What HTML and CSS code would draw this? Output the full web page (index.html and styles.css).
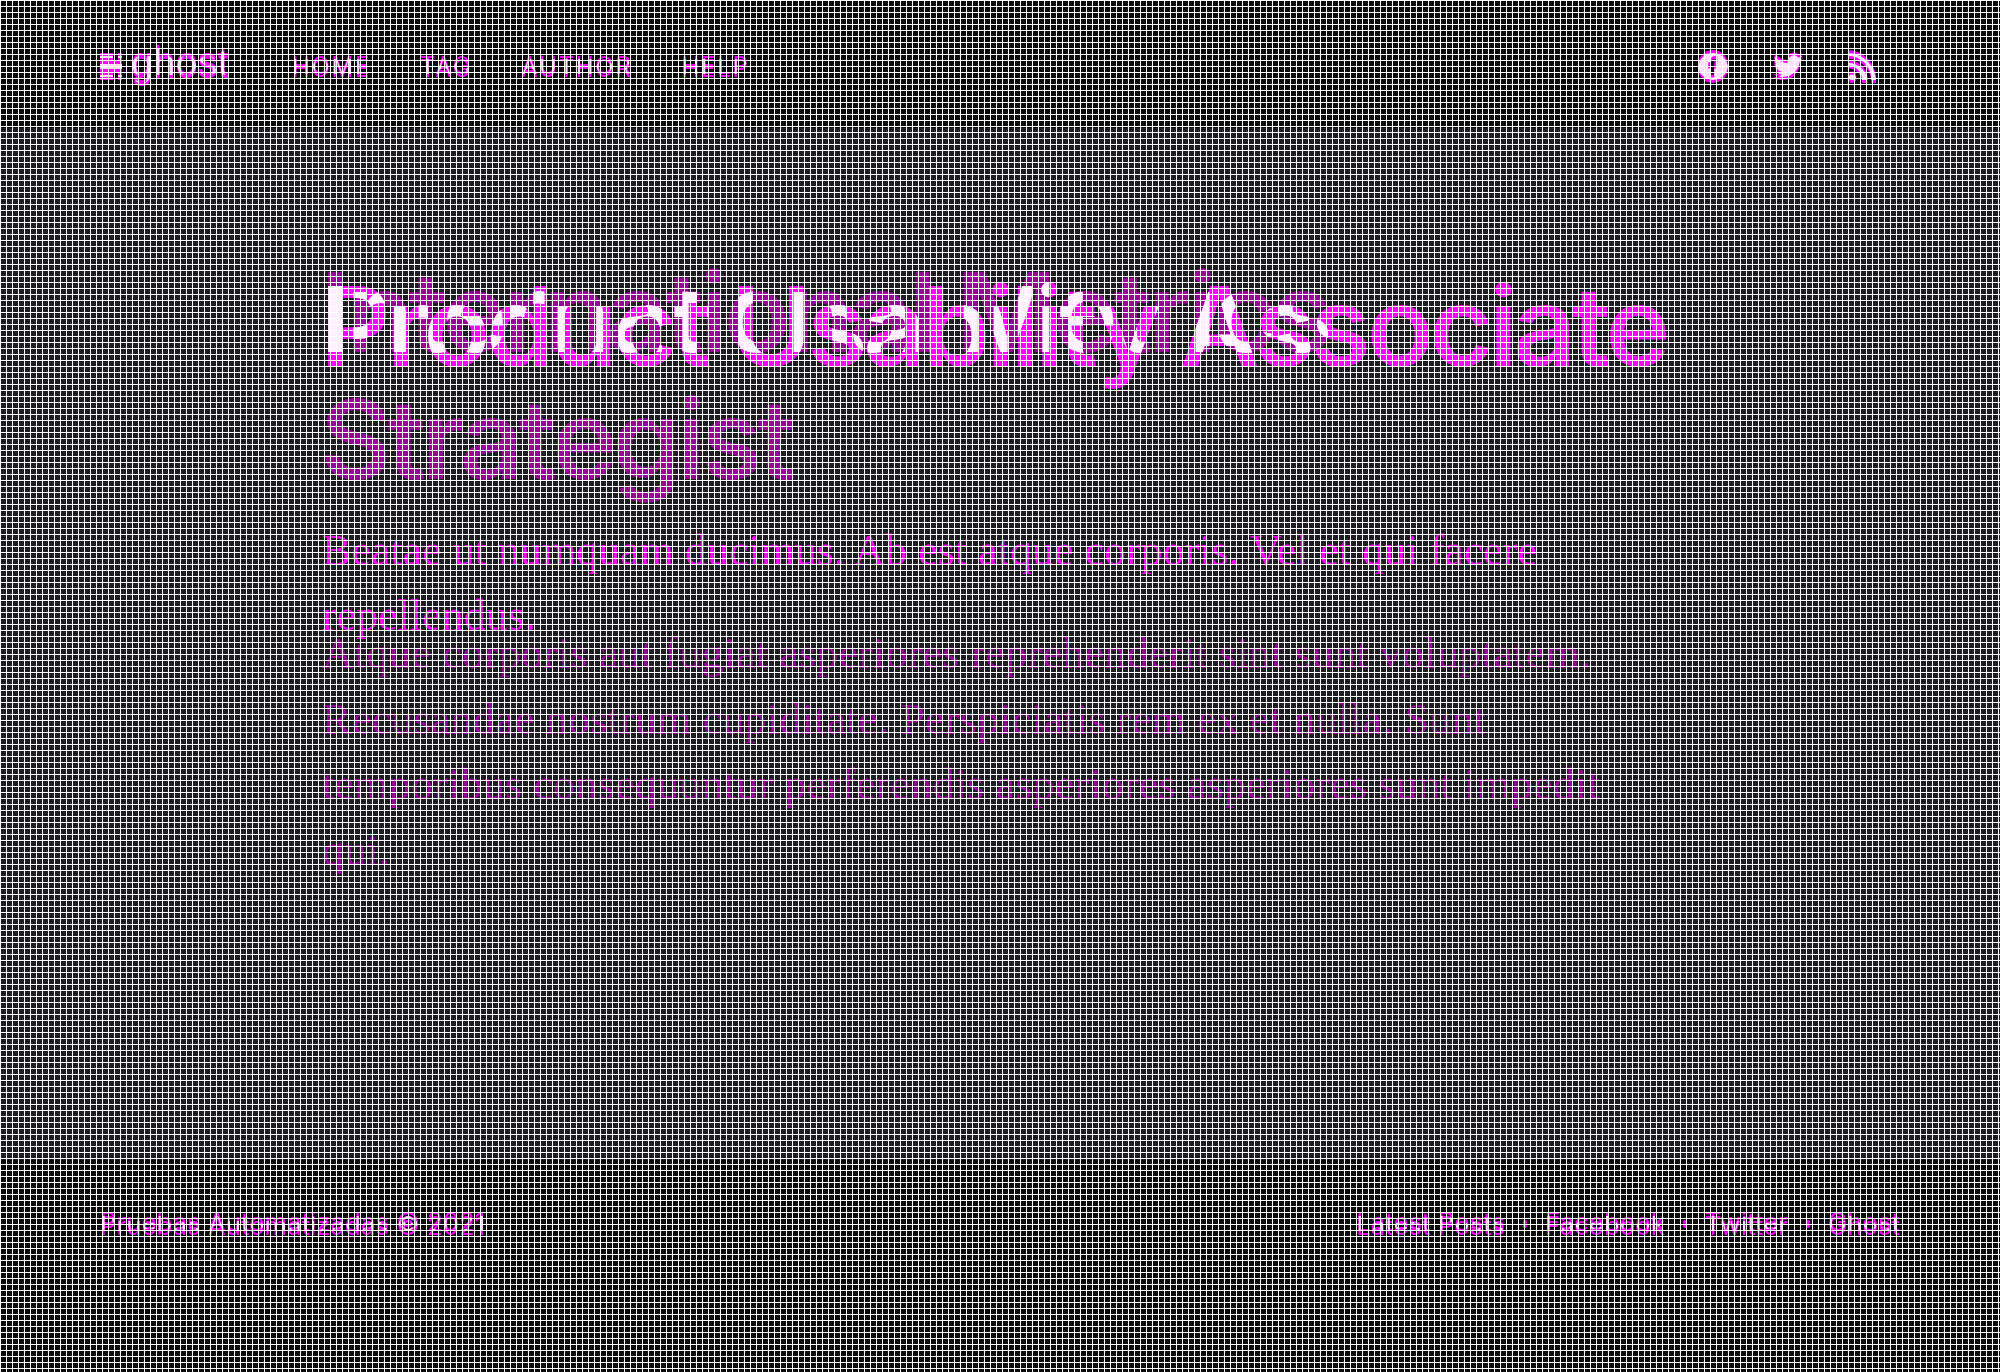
FILE: index.html
```html
<!DOCTYPE html>
<html lang="en">
<head>
<meta charset="utf-8">
<title>Product Usability Associate</title>
<link rel="stylesheet" href="styles.css">
</head>
<body>
<svg class="defs" width="0" height="0" aria-hidden="true">
  <symbol id="i-mark" viewBox="0 0 22 24">
    <rect x="0" y="0" width="13" height="5"/><rect x="18" y="0" width="4" height="5"/>
    <rect x="0" y="8" width="22" height="8"/>
    <rect x="0" y="19" width="13" height="5"/><rect x="18" y="19" width="4" height="5"/>
  </symbol>
  <symbol id="i-fb" viewBox="0 0 32 32">
    <path d="M16 0a16 16 0 1 0 0 32 16 16 0 0 0 0-32zm4.6 10.2h-2.2c-1 0-1.2.5-1.2 1.200v1.700h3.300l-.4 3.400h-2.900V26h-3.500v-9.500H10.900v-3.400h2.800v-2.200c0-3 1.700-4.400 4.200-4.400 1.200 0 2.200.1 2.700.1z"/>
  </symbol>
  <symbol id="i-tw" viewBox="0 0 32 27">
    <path d="M32 3.200a13 13 0 0 1-3.800 1 6.500 6.500 0 0 0 2.900-3.600 13 13 0 0 1-4.100 1.600A6.600 6.600 0 0 0 15.800 8.200 18.600 18.600 0 0 1 2.300 1.300a6.600 6.600 0 0 0 2 8.800 6.500 6.500 0 0 1-3-.8v.1a6.600 6.600 0 0 0 5.300 6.400 6.600 6.600 0 0 1-3 .1 6.600 6.600 0 0 0 6.200 4.600A13.200 13.200 0 0 1 0 23.300 18.600 18.600 0 0 0 10 26.200c12.100 0 18.800-10 18.800-18.700v-.9A13.400 13.400 0 0 0 32 3.200z"/>
  </symbol>
  <symbol id="i-rss" viewBox="0 0 30 32">
    <circle cx="4.500" cy="27.500" r="4.500"/>
    <path d="M0 10.500v6a15 15 0 0 1 15 15.500h6A21 21 0 0 0 0 10.500z"/>
    <path d="M0 0v6a25.500 25.500 0 0 1 25 26h5A30.500 30.500 0 0 0 0 0z"/>
  </symbol>
</svg>

<div class="stage">
  <div class="page layer-a">
    <header class="site-header">
      <a class="brand"><svg class="mark"><use href="#i-mark"/></svg><span class="word">ghost</span></a>
      <nav class="menu"><a>HOME</a><a>TAG</a><a>AUTHOR</a><a>HELP</a></nav>
      <div class="social">
        <svg class="ico ico-fb"><use href="#i-fb"/></svg>
        <svg class="ico ico-tw"><use href="#i-tw"/></svg>
        <svg class="ico ico-rss"><use href="#i-rss"/></svg>
      </div>
    </header>
    <main class="post">
      <h1 class="title">International Metrics Strategist</h1>
      <p class="excerpt">Atque corporis aut fugiat asperiores reprehenderit sint sunt voluptatem. Recusandae nostrum cupiditate. Perspiciatis rem ex et nulla. Sunt temporibus consequuntur perferendis asperiores asperiores sunt impedit qui.</p>
    </main>
    <footer class="site-footer">
      <span>Pruebas Automatizadas © 2021</span>
      <nav class="foot-links"><a>Latest Posts</a><a>Facebook</a><a>Twitter</a><a>Ghost</a></nav>
    </footer>
  </div>

  <div class="page layer-b over">
    <header class="site-header">
      <a class="brand"><svg class="mark"><use href="#i-mark"/></svg><span class="word">ghost</span></a>
      <nav class="menu"><a>HOME</a><a>TAG</a><a>AUTHOR</a><a>HELP</a></nav>
      <div class="social">
        <svg class="ico ico-fb"><use href="#i-fb"/></svg>
        <svg class="ico ico-tw"><use href="#i-tw"/></svg>
        <svg class="ico ico-rss"><use href="#i-rss"/></svg>
      </div>
    </header>
    <main class="post">
      <h1 class="title">Product Usability Associate</h1>
      <p class="excerpt">Beatae ut numquam ducimus. Ab est atque corporis. Vel et qui facere repellendus.</p>
    </main>
    <footer class="site-footer">
      <span>Pruebas Automatizadas © 2021</span>
      <nav class="foot-links"><a>Latest Posts</a><a>Facebook</a><a>Twitter</a><a>Ghost</a></nav>
    </footer>
  </div>

  <div class="overlap over" aria-hidden="true">
    <div class="page layer-a same">
      <header class="site-header">
        <a class="brand"><svg class="mark"><use href="#i-mark"/></svg><span class="word">ghost</span></a>
        <nav class="menu"><a>HOME</a><a>TAG</a><a>AUTHOR</a><a>HELP</a></nav>
        <div class="social">
          <svg class="ico ico-fb"><use href="#i-fb"/></svg>
          <svg class="ico ico-tw"><use href="#i-tw"/></svg>
          <svg class="ico ico-rss"><use href="#i-rss"/></svg>
        </div>
      </header>
      <main class="post"><h1 class="title">International Metrics Strategist</h1></main>
      <footer class="site-footer">
        <span>Pruebas Automatizadas © 2021</span>
        <nav class="foot-links"><a>Latest Posts</a><a>Facebook</a><a>Twitter</a><a>Ghost</a></nav>
      </footer>
    </div>
    <div class="page layer-b same mask over">
      <header class="site-header">
        <a class="brand"><svg class="mark"><use href="#i-mark"/></svg><span class="word">ghost</span></a>
        <nav class="menu"><a>HOME</a><a>TAG</a><a>AUTHOR</a><a>HELP</a></nav>
        <div class="social">
          <svg class="ico ico-fb"><use href="#i-fb"/></svg>
          <svg class="ico ico-tw"><use href="#i-tw"/></svg>
          <svg class="ico ico-rss"><use href="#i-rss"/></svg>
        </div>
      </header>
      <main class="post"><h1 class="title">Product Usability Associate</h1></main>
      <footer class="site-footer">
        <span>Pruebas Automatizadas © 2021</span>
        <nav class="foot-links"><a>Latest Posts</a><a>Facebook</a><a>Twitter</a><a>Ghost</a></nav>
      </footer>
    </div>
  </div>

  <div class="grid over" aria-hidden="true"></div>
</div>
</body>
</html>
```

FILE: styles.css
```css
* { box-sizing: border-box; }

html, body {
  margin: 0;
  background: #0a0a0a;
}

.defs { position: absolute; }

.stage {
  position: relative;
  width: 2000px;
  height: 1372px;
  overflow: hidden;
  font-family: Inter, "Liberation Sans", Arial, sans-serif;
}

.over {
  position: absolute;
  inset: 0;
}

.page {
  display: flex;
  flex-direction: column;
  width: 2000px;
  height: 1372px;
  background: var(--paper);
}

/* older capture: title sits higher, text reads dim */
.layer-a {
  --paper: #1e1e22;
  --band: #0a0a0a;
  --title-ink: #990099;
  --edge-ink: #ff00ff;
  --head-shift: 2px;
  --title-top: 121px;
  --excerpt-gap: 119px;
  --excerpt-size: 44.5px;
  --foot-shift: 0px;
}

/* newer capture: transparent, bright, a few pixels lower */
.layer-b {
  --paper: transparent;
  --band: transparent;
  --title-ink: #ff00ff;
  --edge-ink: #ff00ff;
  --head-shift: 8px;
  --title-top: 135px;
  --excerpt-gap: 128px;
  --excerpt-size: 44px;
  --foot-shift: 4px;
}

.overlap {
  isolation: isolate;
  mix-blend-mode: screen;
  background: #000;
}

.same {
  --paper: #000;
  --band: #000;
  --title-ink: #eeeeee;
  --edge-ink: #dddddd;
}

.mask {
  --title-ink: #fff;
  --edge-ink: #fff;
  mix-blend-mode: multiply;
}

.site-header {
  display: flex;
  align-items: center;
  flex: none;
  height: 128px;
  padding: var(--head-shift) 124px 0 100px;
  background: var(--band);
  color: var(--edge-ink);
}

.brand {
  display: flex;
  align-items: center;
  gap: 9px;
  width: 192px;
}

.mark {
  width: 22px;
  height: 24px;
  fill: currentColor;
  flex: none;
}

.word {
  font-family: "Liberation Sans", Arial, sans-serif;
  font-size: 40px;
  line-height: 48px;
  margin-top: -8px;
}

.menu {
  display: flex;
  gap: 49px;
  font-size: 24px;
  letter-spacing: 1.7px;
}

.social {
  display: flex;
  align-items: center;
  gap: 45px;
  margin-left: auto;
}

.ico {
  display: block;
  fill: currentColor;
}

.ico-fb { width: 30px; height: 30px; }
.ico-tw { width: 30px; height: 26px; }
.ico-rss { width: 28px; height: 30px; }

.post {
  flex: 1;
  padding: var(--title-top) 324px 0 322px;
}

.title {
  margin: 0 0 var(--excerpt-gap) -2px;
  font-size: 110px;
  line-height: 126.5px;
  font-weight: 600;
  letter-spacing: -4.4px;
  color: var(--title-ink);
}

.excerpt {
  max-width: 1320px;
  margin: 0;
  font-family: "Liberation Serif", "Times New Roman", serif;
  font-size: var(--excerpt-size);
  line-height: 65.5px;
  color: var(--title-ink);
}

.site-footer {
  display: flex;
  justify-content: space-between;
  flex: none;
  height: 212px;
  padding: calc(41px + var(--foot-shift)) 100px 0;
  background: var(--band);
  color: var(--edge-ink);
  font-size: 25.8px;
  line-height: 42px;
}

.foot-links {
  display: flex;
  gap: 40px;
}

.foot-links a {
  position: relative;
}

.foot-links a + a::before {
  content: "";
  position: absolute;
  left: -22px;
  top: 19px;
  width: 4px;
  height: 4px;
  border-radius: 50%;
  background: currentColor;
}

.grid {
  background-image:
    repeating-linear-gradient(to right, #fff 0 1px, transparent 1px 6px),
    repeating-linear-gradient(to bottom, #fff 0 1px, transparent 1px 6px);
  pointer-events: none;
}
```
